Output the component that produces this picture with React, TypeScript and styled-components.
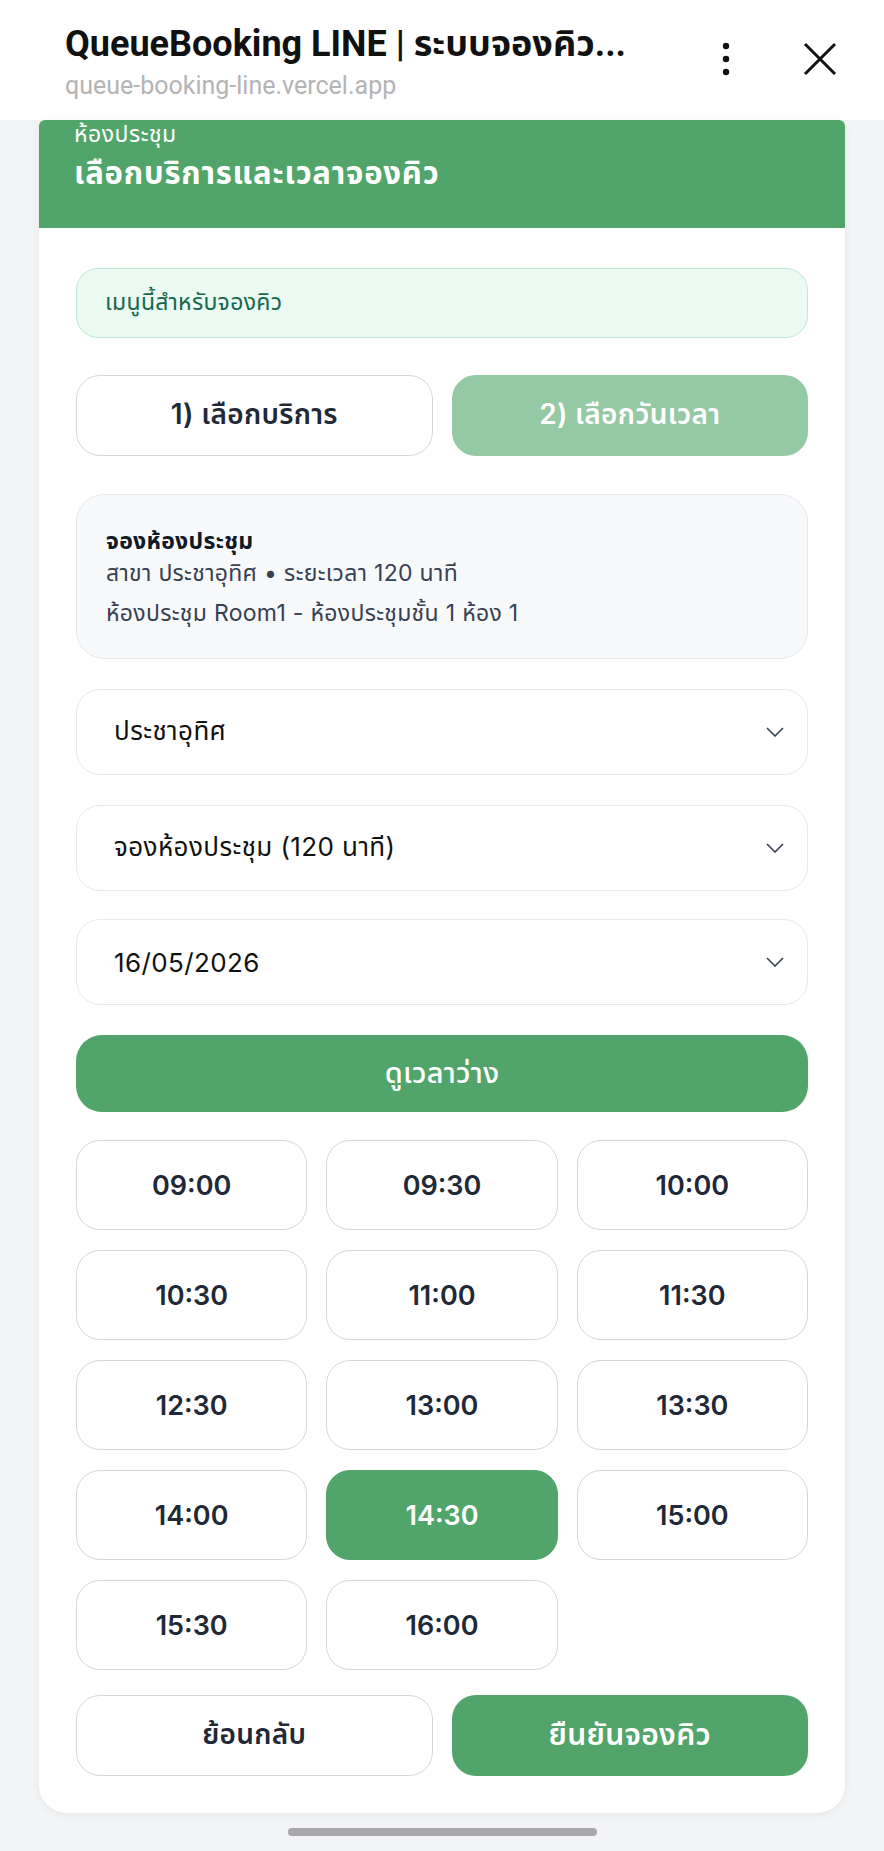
import React from "react";
import styled, { createGlobalStyle } from "styled-components";

const GlobalStyle = createGlobalStyle`
  * { box-sizing: border-box; }
  body {
    margin: 0;
    background: #f3f4f6;
    font-family: Inter, "Noto Sans Thai", "Noto Sans", "Liberation Sans", sans-serif;
  }
`;

const green = "#52a56a";

const slots = [
  "09:00", "09:30", "10:00",
  "10:30", "11:00", "11:30",
  "12:30", "13:00", "13:30",
  "14:00", "14:30", "15:00",
  "15:30", "16:00",
];

const Screen = styled.div`
  width: 884px;
  min-height: 1851px;
  background: #f3f4f6;
  display: flex;
  flex-direction: column;
`;

const BrowserBar = styled.div`
  height: 120px;
  background: #fff;
  display: flex;
  align-items: flex-start;
  padding: 22px 47px 0 65px;
`;

const BarTitles = styled.div`
  flex: 1;
  display: flex;
  flex-direction: column;
`;

const PageTitle = styled.div`
  font-family: Roboto, "Noto Sans Thai", sans-serif;
  font-weight: 700;
  font-size: 36px;
  color: #111;
  line-height: 44px;
  white-space: nowrap;
`;

const PageUrl = styled.div`
  font-family: Roboto, sans-serif;
  font-size: 25px;
  color: #b4b4b4;
  line-height: 30px;
  margin-top: 5px;
`;

const BarIcons = styled.div`
  display: flex;
  align-items: center;
  gap: 73px;
  padding-top: 20px;
`;

const Page = styled.div`
  padding: 0 39px;
`;

const Card = styled.div`
  background: #fff;
  border-radius: 6px 6px 28px 28px;
  box-shadow: 0 2px 8px rgba(0, 0, 0, 0.06);
  overflow: hidden;
`;

const CardHead = styled.div`
  background: ${green};
  color: #fff;
  padding: 0 35px 36px;
`;

const HeadLabel = styled.div`
  font-size: 23px;
  line-height: 28px;
  letter-spacing: 0.5px;
`;

const HeadTitle = styled.div`
  font-size: 31px;
  font-weight: 700;
  line-height: 38px;
  margin-top: 6px;
  letter-spacing: 0.8px;
`;

const CardBody = styled.div`
  padding: 40px 37px 37px;
  display: flex;
  flex-direction: column;
`;

const Notice = styled.div`
  height: 70px;
  border-radius: 22px;
  background: #ebfaf3;
  border: 1.5px solid #bfe8d3;
  color: #16684c;
  font-size: 23px;
  letter-spacing: 0.3px;
  display: flex;
  align-items: center;
  padding: 0 28px;
`;

const Pair = styled.div<{ $top: number }>`
  display: grid;
  grid-template-columns: 1fr 1fr;
  gap: 19px;
  margin-top: ${(p) => p.$top}px;
`;

const Pill = styled.div<{ $tone: "plain" | "soft" | "solid"; $h: number }>`
  height: ${(p) => p.$h}px;
  border-radius: 24px;
  display: flex;
  align-items: center;
  justify-content: center;
  font-size: ${(p) => (p.$tone === "solid" ? 30 : 28)}px;
  font-weight: 600;
  letter-spacing: 0.3px;
  background: ${(p) =>
    p.$tone === "plain" ? "#fff" : p.$tone === "soft" ? "#95c9a3" : green};
  color: ${(p) => (p.$tone === "plain" ? "#1f2937" : "#fff")};
  border: 1.5px solid ${(p) => (p.$tone === "plain" ? "#d4d7dd" : "transparent")};
`;

const InfoBox = styled.div`
  margin-top: 38px;
  height: 165px;
  border-radius: 28px;
  background: #f8f9fb;
  border: 1.5px solid #e6e8ec;
  padding: 0 29px;
  display: flex;
  flex-direction: column;
  justify-content: center;
  color: #374151;
  font-size: 23px;
  letter-spacing: 0.3px;
`;

const InfoName = styled.div`
  font-weight: 700;
  color: #111827;
  line-height: 32px;
`;

const InfoLine = styled.div<{ $gap?: number }>`
  line-height: 32px;
  margin-top: ${(p) => p.$gap ?? 0}px;
`;

const Select = styled.div<{ $top: number }>`
  margin-top: ${(p) => p.$top}px;
  height: 86px;
  border-radius: 24px;
  border: 1.5px solid #e8e9ec;
  background: #fff;
  display: flex;
  align-items: center;
  justify-content: space-between;
  padding: 0 12px 0 37px;
  font-size: 26px;
  letter-spacing: 0.4px;
  color: #111;
`;

const Chevron = () => (
  <svg width="18" height="10" viewBox="0 0 18 10" fill="none">
    <path d="M1 1l8 8 8-8" stroke="#374151" strokeWidth="1.6" />
  </svg>
);

const ChevronBox = styled.span`
  width: 40px;
  display: flex;
  justify-content: center;
`;

const WideButton = styled.div`
  margin-top: 30px;
  height: 77px;
  border-radius: 26px;
  background: ${green};
  color: #fff;
  font-size: 29px;
  font-weight: 500;
  letter-spacing: 0.3px;
  display: flex;
  align-items: center;
  justify-content: center;
`;

const SlotGrid = styled.div`
  margin-top: 28px;
  display: grid;
  grid-template-columns: repeat(3, 1fr);
  gap: 20px 19px;
`;

const Slot = styled.div<{ $on?: boolean }>`
  height: 90px;
  border-radius: 24px;
  border: 1.5px solid ${(p) => (p.$on ? green : "#d4d7dd")};
  background: ${(p) => (p.$on ? green : "#fff")};
  color: ${(p) => (p.$on ? "#fff" : "#1f2937")};
  font-size: 27px;
  font-weight: 600;
  display: flex;
  align-items: center;
  justify-content: center;
`;

const HomeBar = styled.div`
  width: 309px;
  height: 8px;
  border-radius: 4px;
  background: #a9a9ab;
  margin: 15px auto 0;
`;

export default function App() {
  return (
    <Screen>
      <GlobalStyle />
      <BrowserBar>
        <BarTitles>
          <PageTitle>QueueBooking LINE | ระบบจองคิว...</PageTitle>
          <PageUrl>queue-booking-line.vercel.app</PageUrl>
        </BarTitles>
        <BarIcons>
          <svg width="8" height="34" viewBox="0 0 8 34">
            <circle cx="4" cy="4" r="3.2" fill="#111" />
            <circle cx="4" cy="17" r="3.2" fill="#111" />
            <circle cx="4" cy="30" r="3.2" fill="#111" />
          </svg>
          <svg width="34" height="34" viewBox="0 0 34 34">
            <path d="M2 2l30 30M32 2L2 32" stroke="#111" strokeWidth="3" />
          </svg>
        </BarIcons>
      </BrowserBar>
      <Page>
        <Card>
          <CardHead>
            <HeadLabel>ห้องประชุม</HeadLabel>
            <HeadTitle>เลือกบริการและเวลาจองคิว</HeadTitle>
          </CardHead>
          <CardBody>
            <Notice>เมนูนี้สำหรับจองคิว</Notice>
            <Pair $top={37}>
              <Pill $tone="plain" $h={81}>1) เลือกบริการ</Pill>
              <Pill $tone="soft" $h={81}>2) เลือกวันเวลา</Pill>
            </Pair>
            <InfoBox>
              <InfoName>จองห้องประชุม</InfoName>
              <InfoLine>สาขา ประชาอุทิศ • ระยะเวลา 120 นาที</InfoLine>
              <InfoLine $gap={8}>ห้องประชุม Room1 - ห้องประชุมชั้น 1 ห้อง 1</InfoLine>
            </InfoBox>
            <Select $top={30}>
              ประชาอุทิศ
              <ChevronBox><Chevron /></ChevronBox>
            </Select>
            <Select $top={30}>
              จองห้องประชุม (120 นาที)
              <ChevronBox><Chevron /></ChevronBox>
            </Select>
            <Select $top={28}>
              16/05/2026
              <ChevronBox><Chevron /></ChevronBox>
            </Select>
            <WideButton>ดูเวลาว่าง</WideButton>
            <SlotGrid>
              {slots.map((s) => (
                <Slot key={s} $on={s === "14:30"}>{s}</Slot>
              ))}
            </SlotGrid>
            <Pair $top={25}>
              <Pill $tone="plain" $h={81}>ย้อนกลับ</Pill>
              <Pill $tone="solid" $h={81}>ยืนยันจองคิว</Pill>
            </Pair>
          </CardBody>
        </Card>
      </Page>
      <HomeBar />
    </Screen>
  );
}
